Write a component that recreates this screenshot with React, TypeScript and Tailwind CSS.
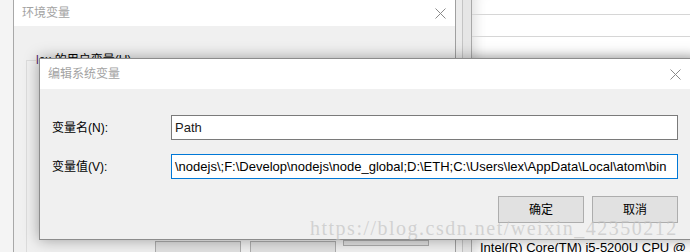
const ui = '"Liberation Sans", "Noto Sans CJK SC", sans-serif';

function CloseX({ className }: { className?: string }) {
  return (
    <svg width="11" height="11" viewBox="0 0 11 11" className={className}>
      <path d="M0.5 0.5 L10.5 10.5 M10.5 0.5 L0.5 10.5" stroke="#8a8a8a" strokeWidth="1" fill="none" />
    </svg>
  );
}

function OldButton({ w, h = 24 }: { w: number; h?: number }) {
  return <div className="border border-[#adadad] bg-[#e1e1e1]" style={{ width: w, height: h }} />;
}

export default function App() {
  return (
    <div className="relative w-[690px] h-[252px] overflow-hidden bg-[#f4f4f4]" style={{ fontFamily: ui }}>
      {/* 环境变量 window behind */}
      <div className="absolute left-[13px] top-0 w-[443px] h-[252px] flex flex-col border-l border-r border-[#a8a8a8] bg-[#f0f0f0]">
        <div className="h-[26px] bg-white flex items-center justify-between pl-[8px] pr-[9px] shrink-0">
          <span className="text-[12px] text-[#a3a3a3]">环境变量</span>
          <CloseX />
        </div>
        <div className="relative flex-1">
          <div className="absolute left-[12px] top-[34px] w-[420px] h-[200px] border-l border-t border-[#dcdcdc]" />
          <div className="absolute left-[22px] top-[27px] text-[12px] text-black bg-[#f0f0f0] pr-1 leading-[14px]">
            <span className="text-[#5a1e6e]">l</span>ex 的用户变量(U)
          </div>
          <div className="absolute left-[141px] top-[215px] flex gap-[9px]">
            <OldButton w={86} />
            <OldButton w={86} />
          </div>
          <div className="absolute left-[329px] top-[214px]">
            <OldButton w={86} h={6} />
          </div>
        </div>
      </div>

      {/* system info window on the right */}
      <div className="absolute left-[455px] top-0 w-[240px] h-[252px] flex border-l border-[#a0a0a0] bg-[#ececec]">
        <div className="w-[7px] shrink-0 border-r border-[#c4c4c4] bg-[#ebebeb]" />
        <div className="w-[9px] shrink-0 border-r border-[#a8a8a8] bg-[#e6e6e6]" />
        <div className="flex-1 min-w-0 flex flex-col bg-white shadow-[inset_14px_0_12px_-10px_rgba(0,0,0,0.12)]">
          <div className="h-[15px] shrink-0 border-b border-[#d6d6d6]" />
          <div className="h-[22px] shrink-0 border-b border-[#d6d6d6]" />
          <div className="h-[21px] shrink-0 shadow-[inset_0_-8px_8px_-6px_rgba(0,0,0,0.12)]" />
          <div className="flex-1" />
          <div className="pl-[8px] text-[13px] leading-[14px] text-black whitespace-nowrap overflow-hidden -mb-[3px]">
            Intel(R) Core(TM) i5-5200U CPU @ 2.20GHz
          </div>
        </div>
      </div>

      {/* 编辑系统变量 dialog */}
      <div className="absolute left-[39px] top-[58px] w-[660px] h-[182px] flex flex-col border border-[#8c8c8c] bg-[#f0f0f0] shadow-[0_0_14px_rgba(0,0,0,0.35)]">
        <div className="h-[30px] bg-white flex items-center justify-between pl-[8px] pr-[17px] shrink-0">
          <span className="text-[12px] text-[#a3a3a3]">编辑系统变量</span>
          <CloseX />
        </div>
        <div className="flex flex-col pt-[26px] pl-[12px] pr-[20px] text-[12px] text-black">
          <div className="flex items-center h-[25px]">
            <span className="w-[119px]">变量名(N):</span>
            <div className="flex-1 h-[25px] bg-white border border-[#7a7a7a] flex items-center pl-[3px] text-[13px] text-[#1a1a1a]">
              Path
            </div>
          </div>
          <div className="flex items-center h-[25px] mt-[14px]">
            <span className="w-[119px]">变量值(V):</span>
            <div className="flex-1 min-w-0 h-[25px] bg-white border border-[#0078d7] flex items-center pl-[3px] text-[13px] overflow-hidden whitespace-nowrap">
              \nodejs\;F:\Develop\nodejs\node_global;D:\ETH;C:\Users\lex\AppData\Local\atom\bin
            </div>
          </div>
          <div className="flex justify-end gap-[8px] mt-[17px]">
            <button className="w-[86px] h-[27px] border border-[#adadad] bg-[#e1e1e1] text-[12px] text-black">确定</button>
            <button className="w-[86px] h-[27px] border border-[#adadad] bg-[#e1e1e1] text-[12px] text-black">取消</button>
          </div>
        </div>
      </div>

      {/* watermark */}
      <div
        className="absolute left-[310px] top-[216px] text-[20px] leading-[24px] text-[#c4c4c4]/70 tracking-[1.5px] whitespace-nowrap pointer-events-none"
        style={{ fontFamily: '"Liberation Serif", serif' }}
      >
        https://blog.csdn.net/weixin_42350212
      </div>
    </div>
  );
}
